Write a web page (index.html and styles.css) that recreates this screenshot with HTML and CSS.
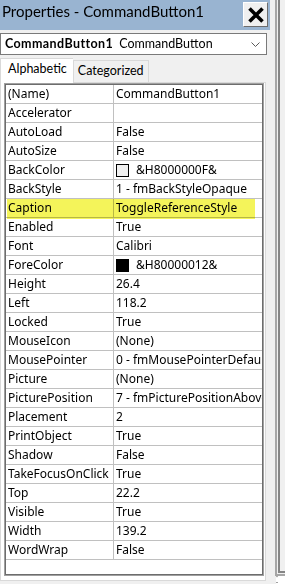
FILE: index.html
```html
<!DOCTYPE html>
<html lang="en">
  <head>
    <meta charset="UTF-8" />
    <meta name="viewport" content="width=device-width, initial-scale=1.0" />
    <title>Properties - CommandButton1</title>
    <link rel="stylesheet" href="styles.css">
  </head>
  <body>
    <div class="window">
      <div class="properties">
        <div class="titlebar">
          <span class="title">Properties - CommandButton1</span>
          <button class="close-btn">
            <svg width="16" height="16" viewBox="0 0 16 16">
              <path d="M1.5 1.5 L14.5 14.5 M14.5 1.5 L1.5 14.5" stroke="#000" stroke-width="3.6" fill="none" />
            </svg>
          </button>
        </div>
        <div class="object-select">
          <span class="object-name">CommandButton1</span>
          <span class="object-type">CommandButton</span>
          <svg class="chevron" width="9" height="5" viewBox="0 0 9 5">
            <path d="M0.5 0.5 L4.5 4.5 L8.5 0.5" stroke="#5a5a5a" stroke-width="1" fill="none" />
          </svg>
        </div>
        <div class="tabs">
          <div class="tab active">Alphabetic</div>
          <div class="tab">Categorized</div>
        </div>
        <div class="tab-page">
          <div class="grid">
            <div class="grid-body" id="grid"></div>
          </div>
        </div>
      </div>
      <div class="side">
        <div class="frame"><div class="frame-inner"></div></div>
        <div class="stub">&#8282;</div>
      </div>
    </div>
    <script>
      // name, value, swatch colour, highlighted
      const props = [
        ['(Name)', 'CommandButton1'],
        ['Accelerator', ''],
        ['AutoLoad', 'False'],
        ['AutoSize', 'False'],
        ['BackColor', '&H8000000F&', '#f0f0f0'],
        ['BackStyle', '1 - fmBackStyleOpaque'],
        ['Caption', 'ToggleReferenceStyle', null, true],
        ['Enabled', 'True'],
        ['Font', 'Calibri'],
        ['ForeColor', '&H80000012&', '#000000'],
        ['Height', '26.4'],
        ['Left', '118.2'],
        ['Locked', 'True'],
        ['MouseIcon', '(None)'],
        ['MousePointer', '0 - fmMousePointerDefault'],
        ['Picture', '(None)'],
        ['PicturePosition', '7 - fmPicturePositionAboveCenter'],
        ['Placement', '2'],
        ['PrintObject', 'True'],
        ['Shadow', 'False'],
        ['TakeFocusOnClick', 'True'],
        ['Top', '22.2'],
        ['Visible', 'True'],
        ['Width', '139.2'],
        ['WordWrap', 'False'],
      ];

      function renderGrid() {
        const grid = document.getElementById('grid');
        grid.innerHTML = '';

        props.forEach(([name, value, color, marked]) => {
          const row = document.createElement('div');
          row.classList.add('row');

          const nameCell = document.createElement('div');
          nameCell.classList.add('name');
          nameCell.innerText = name;

          const valueCell = document.createElement('div');
          valueCell.classList.add('value');
          if (color) {
            const swatch = document.createElement('span');
            swatch.classList.add('swatch');
            swatch.style.background = color;
            valueCell.appendChild(swatch);
          }
          valueCell.appendChild(document.createTextNode(value));

          row.appendChild(nameCell);
          row.appendChild(valueCell);

          if (marked) {
            const mark = document.createElement('span');
            mark.classList.add('highlight');
            row.appendChild(mark);
          }
          grid.appendChild(row);
        });
      }
      renderGrid();
    </script>
  </body>
</html>
```

FILE: styles.css
```css
body {
  margin: 0;
  background: #f0f0f0;
  font-family: "Noto Sans", sans-serif;
  color: #000;
}
.window {
  display: flex;
  height: 584px;
  overflow: hidden;
}
.properties {
  width: 270px;
  flex: none;
}
.titlebar {
  height: 30px;
  box-sizing: border-box;
  padding: 2px 2px 0 2px;
  background: #99b4d1;
  display: flex;
  justify-content: space-between;
  align-items: flex-start;
}
.title {
  font-family: Lato, sans-serif;
  font-size: 15px;
  line-height: 21px;
  margin-top: -1px;
}
.close-btn {
  width: 25px;
  height: 25px;
  padding: 0;
  box-sizing: border-box;
  border: 1px solid;
  border-color: #ffffff #6d6d6d #6d6d6d #ffffff;
  background: #f0f0f0;
  display: flex;
  align-items: center;
  justify-content: center;
}
.object-select {
  margin-top: 3px;
  width: 267px;
  height: 22px;
  box-sizing: border-box;
  border: 1px solid #7a7a7a;
  background: #fff;
  display: flex;
  align-items: center;
  padding-left: 4px;
  font-family: Lato, sans-serif;
  font-size: 12.5px;
  line-height: 20px;
}
.object-name {
  font-weight: bold;
  letter-spacing: 0.4px;
}
.object-type {
  margin-left: 6px;
}
.chevron {
  margin-left: auto;
  margin-right: 6px;
}
.tabs {
  margin-top: 3px;
  height: 25px;
  margin-bottom: -1px;
  display: flex;
  align-items: flex-end;
  position: relative;
  z-index: 1;
  font-family: Lato, sans-serif;
  font-size: 12.5px;
}
.tab {
  box-sizing: border-box;
  height: 22px;
  margin-bottom: 1px;
  padding: 0 4px;
  border: 1px solid #d9d9d9;
  border-bottom: none;
  background: #f0f0f0;
  line-height: 19px;
}
.tab.active {
  height: 25px;
  margin-bottom: 0;
  padding: 0 6px 0 7px;
  background: #fff;
  border-right: none;
  line-height: 20px;
}
.tab-page {
  width: 266px;
  height: 499px;
  box-sizing: border-box;
  border: 1px solid #d9d9d9;
  background: #fff;
  padding: 0 1px 4px 3px;
}
.grid {
  height: 100%;
  box-sizing: border-box;
  border: 1px solid #a0a0a0;
}
.grid-body {
  height: 100%;
  box-sizing: border-box;
  border: 1px solid #6d6d6d;
  background: #fff;
  font-size: 12px;
  line-height: 18px;
}
.row {
  display: flex;
  height: 19px;
  box-sizing: border-box;
  border-bottom: 1px solid #c0c0c0;
  position: relative;
}
.name {
  width: 108px;
  flex: none;
  box-sizing: border-box;
  border-right: 1px solid #c0c0c0;
  padding-left: 2px;
  white-space: nowrap;
}
.value {
  flex: 1;
  padding-left: 2px;
  white-space: nowrap;
  overflow: hidden;
  display: flex;
  align-items: center;
}
.swatch {
  width: 11px;
  height: 11px;
  border: 1px solid #000;
  margin-right: 7px;
  flex: none;
}
.highlight {
  position: absolute;
  left: 1px;
  top: 0;
  bottom: -2px;
  width: 248px;
  background: #f4f45a;
  mix-blend-mode: multiply;
}
.side {
  flex: 1;
  padding-left: 5px;
}
.frame {
  height: 576px;
  box-sizing: border-box;
  border-left: 2px solid #a6a6a6;
  border-bottom: 2px solid #a6a6a6;
  padding: 0 0 1px 1px;
}
.frame-inner {
  height: 100%;
  box-sizing: border-box;
  border-left: 2px solid #858585;
  border-bottom: 2px solid #858585;
}
.stub {
  margin-left: 1px;
  height: 8px;
  background: #fff;
  font-size: 9px;
  line-height: 8px;
  color: #333;
  overflow: hidden;
}
```
